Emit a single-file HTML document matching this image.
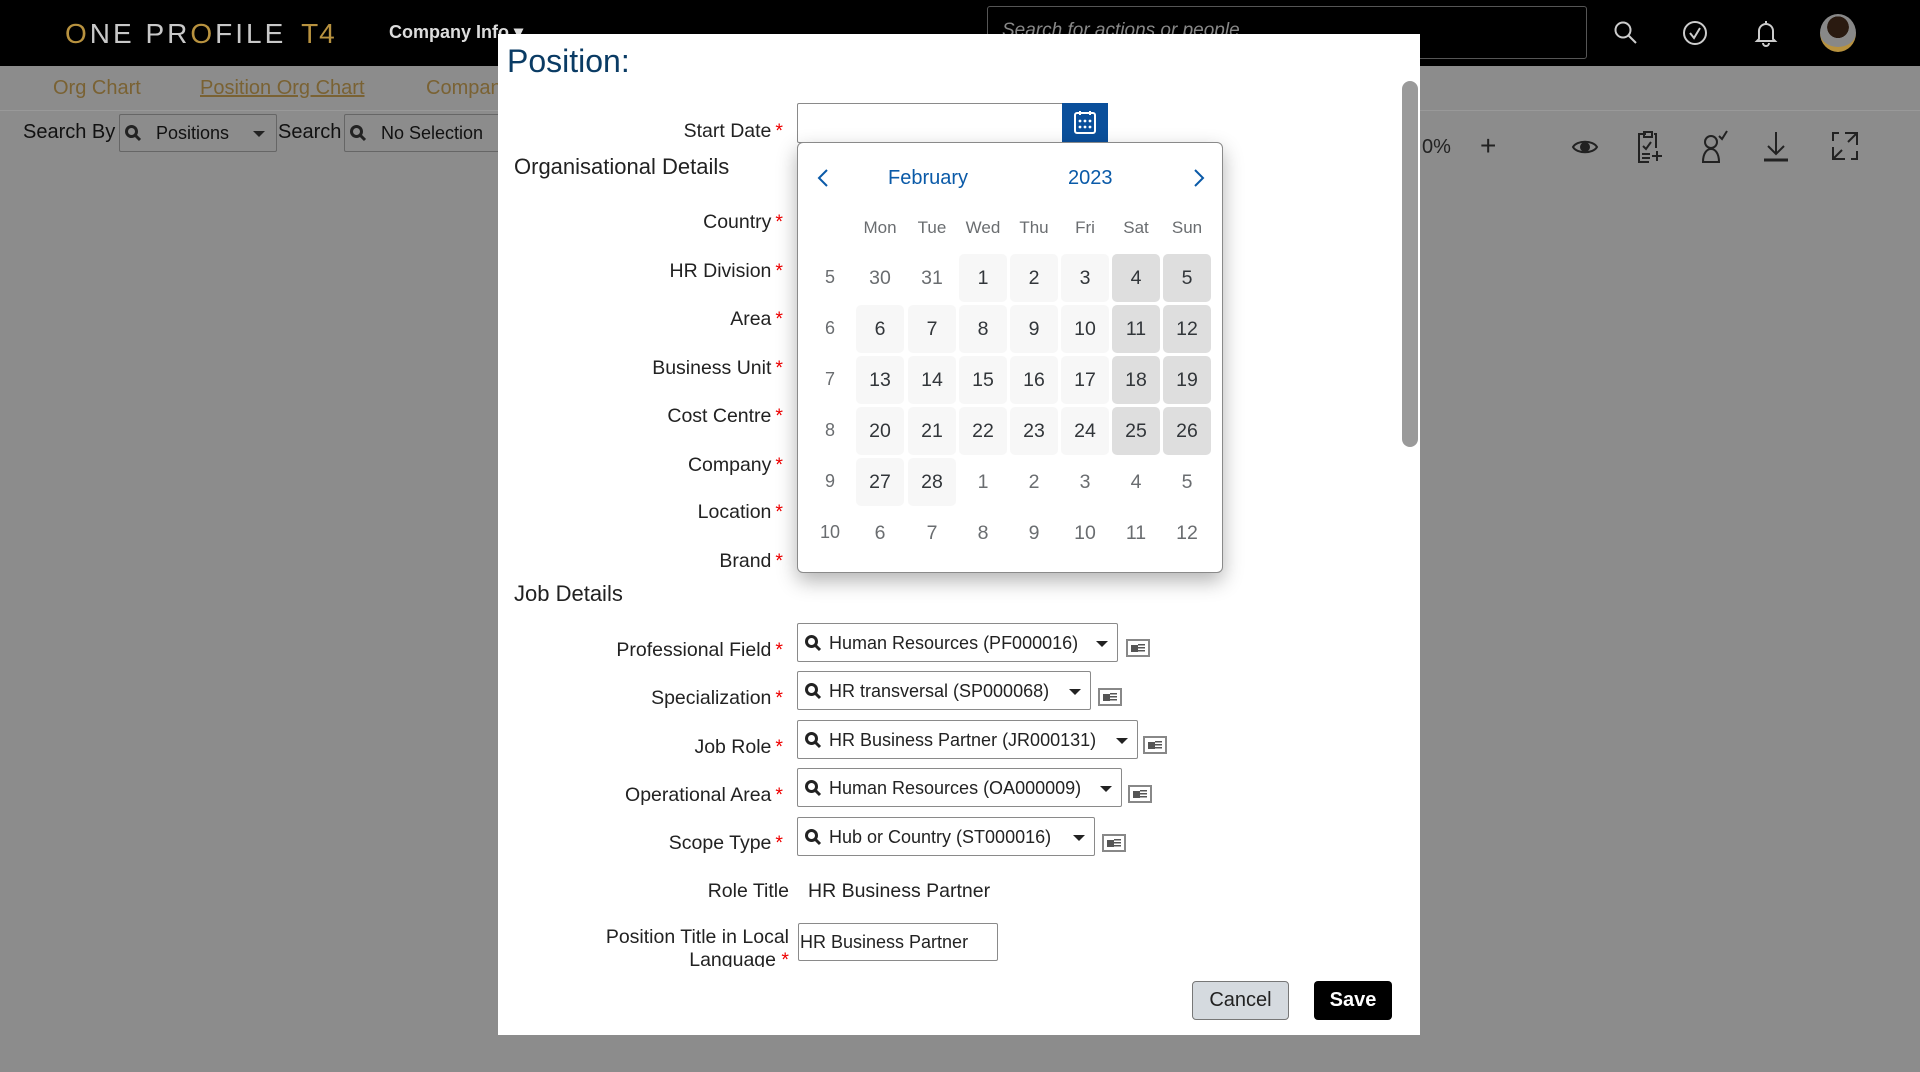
<!DOCTYPE html>
<html><head><meta charset="utf-8"><style>
*{box-sizing:border-box;margin:0;padding:0}
body{width:1920px;height:1072px;overflow:hidden;background:#8c8c8c;font-family:"Liberation Sans",sans-serif;position:relative;color:#222}
.a{position:absolute;white-space:nowrap}
.top{position:absolute;left:0;top:0;width:1920px;height:66px;background:#000}
.tab{color:#7a6233;font-size:20px;top:77px}
.lbl{position:absolute;right:1137px;font-size:19.5px;color:#222;white-space:nowrap}
.lbl b{color:#e00;font-weight:normal;margin-left:4px}
.combo{position:absolute;left:797px;height:39px;border:1px solid #8a8a8a;border-radius:2px;background:#fff;font-size:18px;color:#222}
.combo span{position:absolute;left:31px;top:9px;white-space:nowrap}
.combo .ar{position:absolute;right:9px;top:17px;width:0;height:0;border-left:6px solid transparent;border-right:6px solid transparent;border-top:6px solid #222}
.combo svg{position:absolute;left:6px;top:10px}
.card{position:absolute;width:24px;height:18px;border:2px solid #888;background:#fff}
.card:before{content:"";position:absolute;left:3px;top:4px;width:7px;height:7px;background:#555}
.card:after{content:"";position:absolute;right:3px;top:3px;width:7px;height:9px;background:repeating-linear-gradient(#555 0 1.5px,transparent 1.5px 3px)}
.cal{position:absolute;left:797px;top:142px;width:426px;height:431px;background:#fff;border:1px solid #8a8a8a;border-radius:6px;box-shadow:0 8px 20px rgba(0,0,0,.3)}
.c{position:absolute;width:48px;height:48px;text-align:center;line-height:48px;font-size:19.5px;border-radius:5px;color:#6a6d70}
.c.m{background:#f7f7f7;color:#32363a}
.c.w{background:#dedede;color:#32363a}
.dn{position:absolute;width:48px;text-align:center;font-size:17px;color:#6a6d70;top:75px}
.wk{position:absolute;left:14px;width:36px;text-align:center;font-size:18px;color:#6a6d70}
</style></head><body>
<div class="top"></div>
<div class="a" style="left:65px;top:18px;font-size:28px;letter-spacing:3px;color:#c8c8c8"><span style="color:#b8923f">O</span>NE PR<span style="color:#b8923f">O</span>FILE <span style="color:#b8923f;letter-spacing:1px;margin-left:4px">T4</span></div>
<div class="a" style="left:389px;top:22px;font-size:18px;font-weight:bold;color:#ddd">Company Info ▾</div>
<div class="a" style="left:987px;top:6px;width:600px;height:53px;border:1px solid #555;border-radius:3px"></div>
<div class="a" style="left:1002px;top:20px;font-size:19px;font-style:italic;color:#888">Search for actions or people</div>
<svg class="a" style="left:1613px;top:20px" width="26" height="26" viewBox="0 0 26 26" fill="none" stroke="#ccc" stroke-width="2"><circle cx="10" cy="10" r="7.5"/><path d="M15.5 15.5L23 23"/></svg>
<svg class="a" style="left:1682px;top:20px" width="26" height="26" viewBox="0 0 26 26" fill="none" stroke="#ccc" stroke-width="2"><circle cx="13" cy="13" r="11"/><path d="M8 13l4 5 6-10"/></svg>
<svg class="a" style="left:1754px;top:19px" width="24" height="28" viewBox="0 0 24 28" fill="none" stroke="#ccc" stroke-width="2"><path d="M12 2v2M5 20V12a7 7 0 0114 0v8l2 2H3z M9 24a3 3 0 006 0"/></svg>
<div class="a" style="left:1820px;top:14px;width:36px;height:38px;border-radius:50%;background:radial-gradient(circle at 50% 40%,#2a1a10 0 40%,#888 41%);border-bottom:5px solid #b8923f"></div>

<div class="a tab" style="left:53px">Org Chart</div>
<div class="a tab" style="left:200px;text-decoration:underline">Position Org Chart</div>
<div class="a tab" style="left:426px">Company</div>
<div class="a" style="left:0;top:110px;width:1920px;height:1px;background:#999"></div>
<div class="a" style="left:23px;top:121px;font-size:20px;color:#111">Search By</div>
<div class="a" style="left:119px;top:114px;width:158px;height:38px;border:1px solid #666;border-radius:2px"></div>
<svg class="a" style="left:124px;top:124px" width="18" height="18" viewBox="0 0 18 18" fill="none" stroke="#222" stroke-width="3"><circle cx="7.5" cy="7.5" r="5"/><path d="M11 11l5 5"/></svg>
<div class="a" style="left:156px;top:123px;font-size:18px;color:#111">Positions</div>
<div class="a" style="left:253px;top:131px;border-left:6px solid transparent;border-right:6px solid transparent;border-top:6px solid #222"></div>
<div class="a" style="left:278px;top:121px;font-size:20px;color:#111">Search</div>
<div class="a" style="left:344px;top:114px;width:170px;height:38px;border:1px solid #666;border-radius:2px"></div>
<svg class="a" style="left:349px;top:124px" width="18" height="18" viewBox="0 0 18 18" fill="none" stroke="#222" stroke-width="3"><circle cx="7.5" cy="7.5" r="5"/><path d="M11 11l5 5"/></svg>
<div class="a" style="left:381px;top:123px;font-size:18px;color:#111">No Selection</div>
<div class="a" style="left:1422px;top:136px;font-size:20px;color:#222">0%</div>
<div class="a" style="left:1480px;top:130px;font-size:28px;color:#222">+</div>
<svg class="a" style="left:1571px;top:136px" width="28" height="22" viewBox="0 0 28 22" fill="none" stroke="#222" stroke-width="2"><path d="M2 11c4-7 20-7 24 0c-4 7-20 7-24 0z"/><circle cx="14" cy="11" r="4" fill="#222"/></svg>
<svg class="a" style="left:1636px;top:130px" width="30" height="34" viewBox="0 0 30 34" fill="none" stroke="#222" stroke-width="2"><path d="M10 4H3v28h10M18 4h2v14M8 2h8v5H8z M7 16l3 3 5-7M6 24h8M6 28h8M16 26h10M21 21v10"/></svg>
<svg class="a" style="left:1700px;top:130px" width="30" height="34" viewBox="0 0 30 34" fill="none" stroke="#222" stroke-width="2"><circle cx="11" cy="12" r="6"/><path d="M3 32c0-9 4-13 8-13s8 4 8 13zM19 6l3 3 5-8"/></svg>
<svg class="a" style="left:1762px;top:130px" width="28" height="32" viewBox="0 0 28 32" fill="none" stroke="#222" stroke-width="2"><path d="M14 2v22M6 16l8 8 8-8"/><path d="M2 30h24" stroke-width="3"/></svg>
<svg class="a" style="left:1831px;top:131px" width="28" height="30" viewBox="0 0 28 30" fill="none" stroke="#222" stroke-width="2"><path d="M14 2h12v12M26 2l-9 9M2 16v12h12M2 28l9-9M2 10V2h6M26 20v8h-6"/></svg>

<!-- modal -->
<div class="a" style="left:498px;top:34px;width:922px;height:1001px;background:#fff"></div>
<div class="a" style="left:1402px;top:81px;width:16px;height:366px;background:#9a9a9a;border-radius:8px"></div>
<div class="a" style="left:507px;top:43px;font-size:32px;color:#0a3b64">Position:</div>
<div class="lbl" style="top:120px">Start Date<b>*</b></div>
<div class="a" style="left:797px;top:103px;width:311px;height:40px;border:1px solid #8a8a8a;border-radius:2px;background:#fff"></div>
<div class="a" style="left:1062px;top:103px;width:46px;height:39px;background:#0a4f9b"></div>
<svg class="a" style="left:1073px;top:110px" width="24" height="25" viewBox="0 0 24 25" fill="none" stroke="#fff" stroke-width="2"><rect x="2" y="3" width="20" height="20" rx="2"/><path d="M7 1v4M17 1v4"/><g fill="#fff" stroke="none"><circle cx="7" cy="11" r="1.4"/><circle cx="12" cy="11" r="1.4"/><circle cx="17" cy="11" r="1.4"/><circle cx="7" cy="17" r="1.4"/><circle cx="12" cy="17" r="1.4"/><circle cx="17" cy="17" r="1.4"/></g></svg>
<div class="a" style="left:514px;top:154px;font-size:22px;color:#222">Organisational Details</div>
<div class="lbl" style="top:211px">Country<b>*</b></div>
<div class="lbl" style="top:260px">HR Division<b>*</b></div>
<div class="lbl" style="top:308px">Area<b>*</b></div>
<div class="lbl" style="top:357px">Business Unit<b>*</b></div>
<div class="lbl" style="top:405px">Cost Centre<b>*</b></div>
<div class="lbl" style="top:454px">Company<b>*</b></div>
<div class="lbl" style="top:501px">Location<b>*</b></div>
<div class="lbl" style="top:550px">Brand<b>*</b></div>
<div class="a" style="left:514px;top:581px;font-size:22px;color:#222">Job Details</div>
<div class="lbl" style="top:639px">Professional Field<b>*</b></div>
<div class="lbl" style="top:687px">Specialization<b>*</b></div>
<div class="lbl" style="top:736px">Job Role<b>*</b></div>
<div class="lbl" style="top:784px">Operational Area<b>*</b></div>
<div class="lbl" style="top:832px">Scope Type<b>*</b></div>
<div class="lbl" style="top:880px;right:1131px">Role Title</div>
<div class="a" style="left:808px;top:880px;font-size:19.5px">HR Business Partner</div>
<div class="a" style="left:500px;top:926px;width:289px;height:41px;overflow:hidden;text-align:right;font-size:19.5px;line-height:23px;white-space:normal">Position Title in Local<br>Language <b style="color:#e00;font-weight:normal">*</b></div>
<div class="a" style="left:798px;top:923px;width:200px;height:38px;border:1px solid #8a8a8a;border-radius:2px"></div>
<div class="a" style="left:800px;top:932px;font-size:18px">HR Business Partner</div>

<div class="combo" style="top:623px;width:321px"><svg width="18" height="18" viewBox="0 0 18 18" fill="none" stroke="#222" stroke-width="3"><circle cx="7.5" cy="7.5" r="5"/><path d="M11 11l5 5"/></svg><span>Human Resources (PF000016)</span><i class="ar"></i></div>
<div class="card" style="left:1126px;top:639px"></div>
<div class="combo" style="top:671px;width:294px"><svg width="18" height="18" viewBox="0 0 18 18" fill="none" stroke="#222" stroke-width="3"><circle cx="7.5" cy="7.5" r="5"/><path d="M11 11l5 5"/></svg><span>HR transversal (SP000068)</span><i class="ar"></i></div>
<div class="card" style="left:1098px;top:688px"></div>
<div class="combo" style="top:720px;width:341px"><svg width="18" height="18" viewBox="0 0 18 18" fill="none" stroke="#222" stroke-width="3"><circle cx="7.5" cy="7.5" r="5"/><path d="M11 11l5 5"/></svg><span>HR Business Partner (JR000131)</span><i class="ar"></i></div>
<div class="card" style="left:1143px;top:736px"></div>
<div class="combo" style="top:768px;width:325px"><svg width="18" height="18" viewBox="0 0 18 18" fill="none" stroke="#222" stroke-width="3"><circle cx="7.5" cy="7.5" r="5"/><path d="M11 11l5 5"/></svg><span>Human Resources (OA000009)</span><i class="ar"></i></div>
<div class="card" style="left:1128px;top:785px"></div>
<div class="combo" style="top:817px;width:298px"><svg width="18" height="18" viewBox="0 0 18 18" fill="none" stroke="#222" stroke-width="3"><circle cx="7.5" cy="7.5" r="5"/><path d="M11 11l5 5"/></svg><span>Hub or Country (ST000016)</span><i class="ar"></i></div>
<div class="card" style="left:1102px;top:834px"></div>

<div class="a" style="left:1192px;top:981px;width:97px;height:39px;background:#d5dadf;border:1px solid #777;border-radius:4px;text-align:center;line-height:37px;font-size:20px;color:#222">Cancel</div>
<div class="a" style="left:1314px;top:981px;width:78px;height:39px;background:#000;border-radius:4px;text-align:center;line-height:39px;font-size:20px;color:#fff;font-weight:bold">Save</div>

<div class="cal">
<svg class="a" style="left:18px;top:25px" width="14" height="20" viewBox="0 0 14 20" fill="none" stroke="#0a5aa8" stroke-width="2"><path d="M11 2L3 10l8 8"/></svg>
<div class="a" style="left:90px;top:24px;font-size:20px;color:#0a5aa8">February</div>
<div class="a" style="left:270px;top:24px;font-size:20px;color:#0a5aa8">2023</div>
<svg class="a" style="left:394px;top:25px" width="14" height="20" viewBox="0 0 14 20" fill="none" stroke="#0a5aa8" stroke-width="2"><path d="M3 2l8 8-8 8"/></svg>
<div class="dn" style="left:58px">Mon</div><div class="dn" style="left:110px">Tue</div><div class="dn" style="left:161px">Wed</div><div class="dn" style="left:212px">Thu</div><div class="dn" style="left:263px">Fri</div><div class="dn" style="left:314px">Sat</div><div class="dn" style="left:365px">Sun</div>
<div class="wk" style="top:124px">5</div><div class="wk" style="top:175px">6</div><div class="wk" style="top:226px">7</div><div class="wk" style="top:277px">8</div><div class="wk" style="top:328px">9</div><div class="wk" style="top:379px">10</div>

<div class="c" style="left:58px;top:111px">30</div><div class="c" style="left:110px;top:111px">31</div><div class="c m" style="left:161px;top:111px">1</div><div class="c m" style="left:212px;top:111px">2</div><div class="c m" style="left:263px;top:111px">3</div><div class="c w" style="left:314px;top:111px">4</div><div class="c w" style="left:365px;top:111px">5</div>
<div class="c m" style="left:58px;top:162px">6</div><div class="c m" style="left:110px;top:162px">7</div><div class="c m" style="left:161px;top:162px">8</div><div class="c m" style="left:212px;top:162px">9</div><div class="c m" style="left:263px;top:162px">10</div><div class="c w" style="left:314px;top:162px">11</div><div class="c w" style="left:365px;top:162px">12</div>
<div class="c m" style="left:58px;top:213px">13</div><div class="c m" style="left:110px;top:213px">14</div><div class="c m" style="left:161px;top:213px">15</div><div class="c m" style="left:212px;top:213px">16</div><div class="c m" style="left:263px;top:213px">17</div><div class="c w" style="left:314px;top:213px">18</div><div class="c w" style="left:365px;top:213px">19</div>
<div class="c m" style="left:58px;top:264px">20</div><div class="c m" style="left:110px;top:264px">21</div><div class="c m" style="left:161px;top:264px">22</div><div class="c m" style="left:212px;top:264px">23</div><div class="c m" style="left:263px;top:264px">24</div><div class="c w" style="left:314px;top:264px">25</div><div class="c w" style="left:365px;top:264px">26</div>
<div class="c m" style="left:58px;top:315px">27</div><div class="c m" style="left:110px;top:315px">28</div><div class="c" style="left:161px;top:315px">1</div><div class="c" style="left:212px;top:315px">2</div><div class="c" style="left:263px;top:315px">3</div><div class="c" style="left:314px;top:315px">4</div><div class="c" style="left:365px;top:315px">5</div>
<div class="c" style="left:58px;top:366px">6</div><div class="c" style="left:110px;top:366px">7</div><div class="c" style="left:161px;top:366px">8</div><div class="c" style="left:212px;top:366px">9</div><div class="c" style="left:263px;top:366px">10</div><div class="c" style="left:314px;top:366px">11</div><div class="c" style="left:365px;top:366px">12</div>
</div>
</body></html>
